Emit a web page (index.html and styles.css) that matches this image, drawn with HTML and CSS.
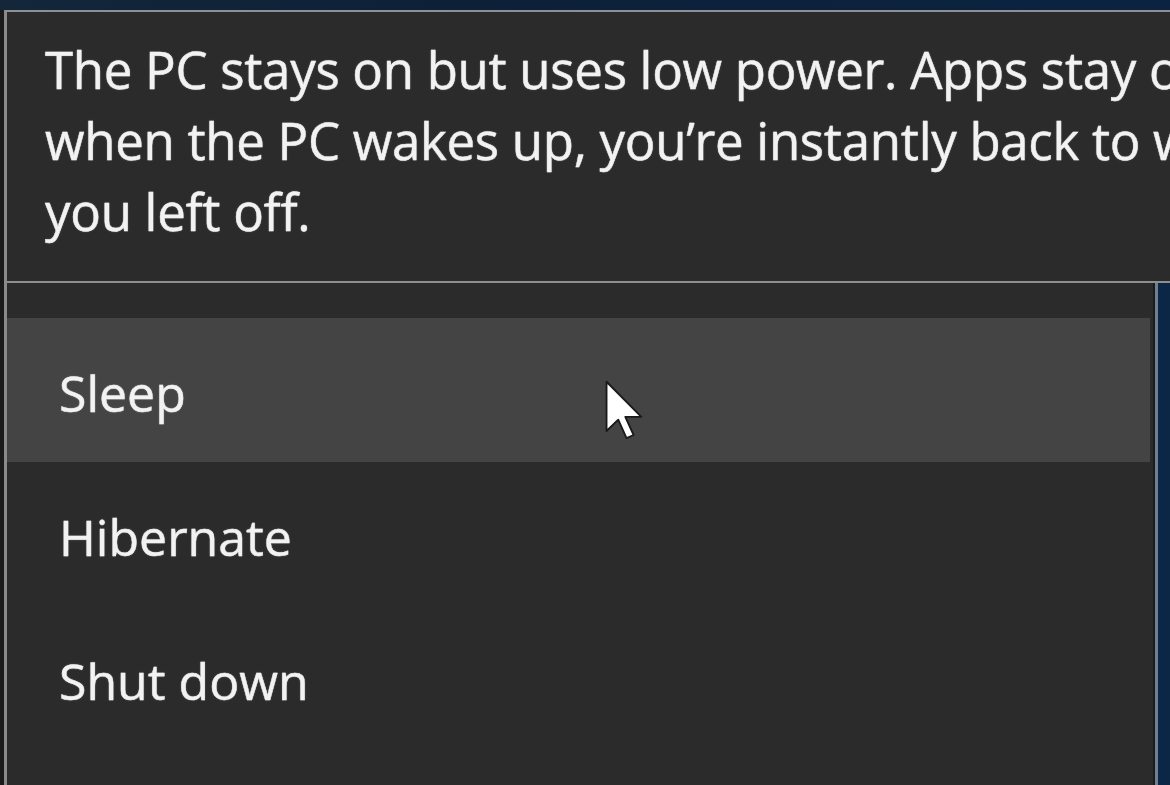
FILE: index.html
```html
<!DOCTYPE html>
<html lang="en">
<head>
<meta charset="utf-8">
<title>Power menu</title>
<link rel="stylesheet" href="styles.css">
</head>
<body>
<div class="screen">
  <div class="top-strip"></div>
  <div class="tooltip">
    <p class="tip-text">
      <span class="line">The PC stays on but uses low power. Apps stay on, so</span>
      <span class="line">when the PC wakes up, you’re instantly back to where</span>
      <span class="line">you left off.</span>
    </p>
  </div>
  <div class="lower">
    <ul class="menu">
      <li class="item active">Sleep</li>
      <li class="item">Hibernate</li>
      <li class="item">Shut down</li>
    </ul>
    <div class="backdrop"></div>
  </div>
  <svg class="cursor" width="40" height="62" viewBox="0 0 13 20" aria-hidden="true">
    <path d="M0.5 0.5 L0.5 16.5 L4.3 12.8 L7 18.8 L9.3 17.8 L6.6 11.9 L11.8 11.9 Z" fill="#ffffff" stroke="#1a1a1a" stroke-width="0.6" stroke-linejoin="round"/>
  </svg>
</div>
</body>
</html>
```
FILE: styles.css
```css
html, body {
  margin: 0;
  padding: 0;
}
body {
  width: 1170px;
  height: 785px;
  overflow: hidden;
  background: #0c2038;
  font-family: "Open Sans", "Noto Sans", sans-serif;
  color: #f2f2f2;
}
.screen {
  position: relative;
  width: 1170px;
  height: 785px;
  display: flex;
  flex-direction: column;
  background: #1b1b1b;
}
.top-strip {
  height: 10px;
  flex: none;
  background: linear-gradient(90deg, #13263a, #0c2038 40%, #0b2340);
}
.tooltip {
  flex: none;
  height: 273px;
  margin-left: 4px;
  background: #2b2b2b;
  border-top: 2px solid #8c9096;
  border-left: 3px solid #8a8a8a;
  border-bottom: 2px solid #8e8e8e;
  box-sizing: border-box;
  padding: 22px 0 0 38px;
  overflow: hidden;
}
.tip-text {
  margin: 0;
  font-size: 51px;
  line-height: 71px;
  letter-spacing: -0.3px;
  white-space: nowrap;
  -webkit-text-stroke: 0.4px #f2f2f2;
  text-shadow: 0 0 2px rgba(255,255,255,0.35);
}
.line {
  display: block;
}
.lower {
  flex: 1;
  display: flex;
  margin-left: 4px;
}
.menu {
  list-style: none;
  margin: 0;
  padding: 35px 0 0 0;
  width: 1149px;
  background: #2b2b2b;
  border-left: 3px solid #8a8a8a;
  box-sizing: border-box;
}
.item {
  height: 144px;
  display: flex;
  align-items: center;
  padding-left: 52px;
  margin-right: 3px;
  font-size: 50px;
  -webkit-text-stroke: 0.4px #f2f2f2;
  text-shadow: 0 0 2px rgba(255,255,255,0.35);
  padding-top: 6px;
  box-sizing: border-box;
}
.item.active {
  background: #444444;
}
.backdrop {
  flex: 1;
  background: #0b2745;
  border-left: 3px solid #6f7f90;
  margin-left: 2px;
}
.cursor {
  position: absolute;
  left: 605px;
  top: 380px;
}
```
